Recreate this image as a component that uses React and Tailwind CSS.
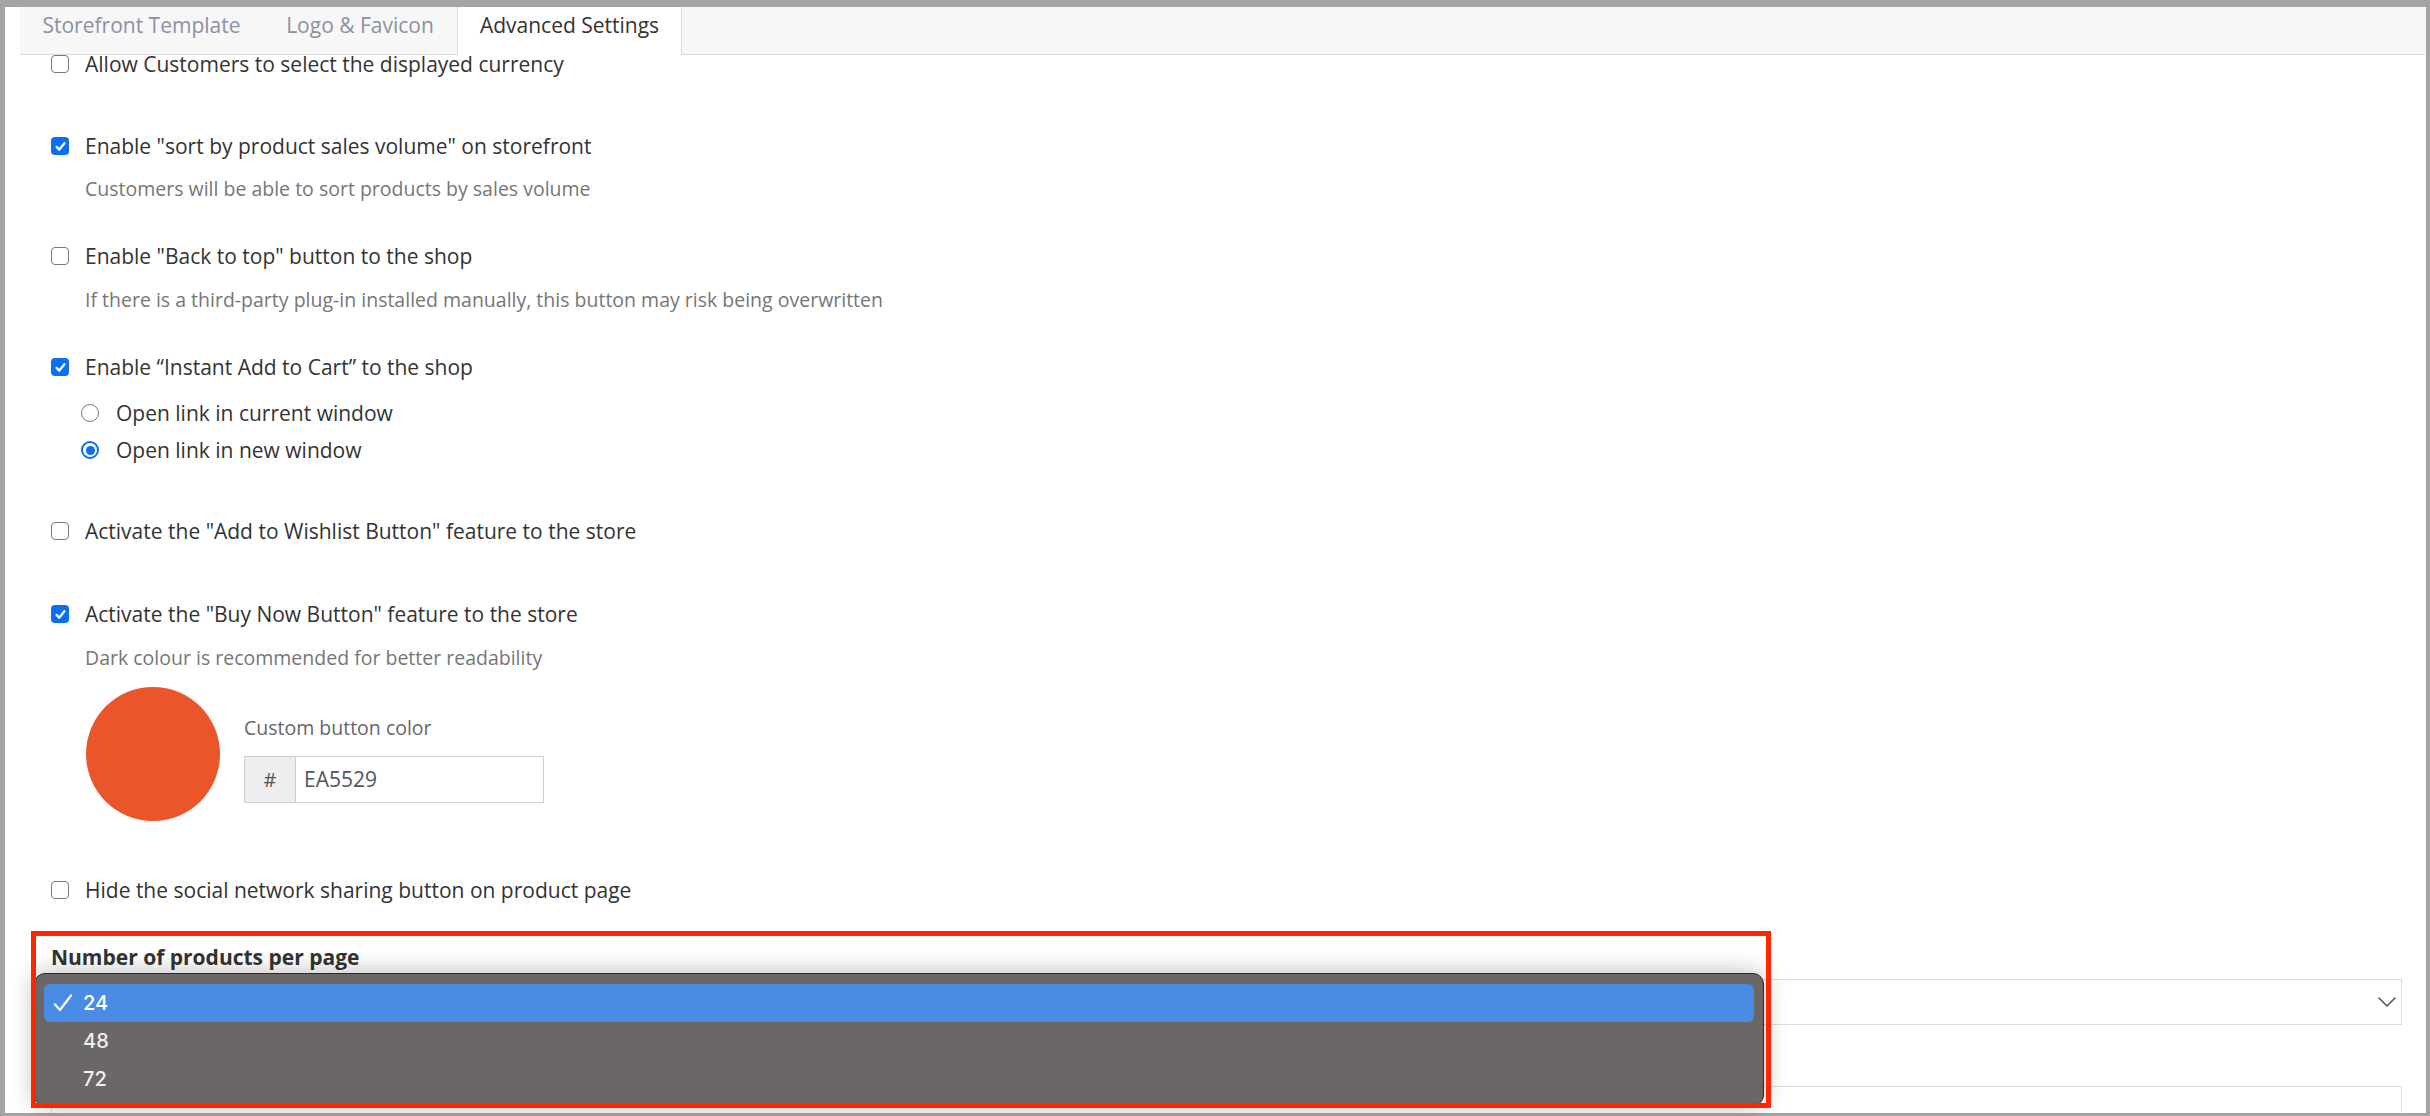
import React from "react";

function Box({ checked }) {
  if (checked) {
    return (
      <span className="w-[18px] h-[18px] rounded-[4px] bg-[#0b6ef5] flex items-center justify-center shrink-0">
        <svg width="13" height="13" viewBox="0 0 13 13">
          <path d="M2.6 6.9 L5.3 9.6 L10.4 3.2" stroke="white" strokeWidth="2.3" fill="none" strokeLinecap="round" strokeLinejoin="round" />
        </svg>
      </span>
    );
  }
  return <span className="w-[18px] h-[18px] rounded-[4px] border border-[#7a7a7a] bg-white shrink-0" />;
}

function Radio({ checked }) {
  if (checked) {
    return (
      <span className="w-[18px] h-[18px] rounded-full border-[2px] border-[#0b6ef5] bg-white flex items-center justify-center shrink-0">
        <span className="w-[9px] h-[9px] rounded-full bg-[#0b6ef5]" />
      </span>
    );
  }
  return <span className="w-[18px] h-[18px] rounded-full border border-[#7a7a7a] bg-white shrink-0" />;
}

function Row({ checked, children, className = "" }) {
  return (
    <div className={"flex items-center h-[18px] gap-[16px] " + className}>
      <Box checked={checked} />
      <span className="text-[21px] leading-[28px] text-[#333] whitespace-nowrap">{children}</span>
    </div>
  );
}

function Desc({ children, className = "" }) {
  return (
    <div className={"pl-[34px] text-[19.5px] leading-[24px] text-[#767676] whitespace-nowrap " + className}>
      {children}
    </div>
  );
}

function RadioRow({ checked, children, className = "" }) {
  return (
    <div className={"flex items-center h-[18px] pl-[30px] gap-[17px] " + className}>
      <Radio checked={checked} />
      <span className="text-[21px] leading-[28px] text-[#333] whitespace-nowrap">{children}</span>
    </div>
  );
}

export default function App() {
  return (
    <div className="relative w-[2430px] h-[1116px] overflow-hidden bg-[#a4a4a4] pt-[7px] pl-[5px] pr-[4px] pb-[3px] font-['Open_Sans',sans-serif]">
      <div className="h-full bg-white overflow-hidden pl-[15px]">
        {/* Tabs */}
        <div className="flex h-[48px] bg-[#f7f7f7] border-b border-[#dcdcdc]">
          <div className="w-[243px] flex items-start pt-[4px] justify-center text-[21px] leading-[28px] text-[#8b91a3] whitespace-nowrap">
            Storefront Template
          </div>
          <div className="w-[194px] flex items-start pt-[4px] justify-center text-[21px] leading-[28px] text-[#8b91a3] whitespace-nowrap">
            Logo &amp; Favicon
          </div>
          <div className="w-[225px] h-[48px] -mb-px bg-white border-x border-[#dcdcdc] flex items-start pt-[4px] justify-center text-[21px] leading-[28px] text-[#333] whitespace-nowrap">
            Advanced Settings
          </div>
        </div>

        {/* Content */}
        <div className="pl-[31px] pr-[24px] flex flex-col">
          <Row checked={false}>Allow Customers to select the displayed currency</Row>

          <Row checked className="mt-[64px]">Enable "sort by product sales volume" on storefront</Row>
          <Desc className="mt-[22px]">Customers will be able to sort products by sales volume</Desc>

          <Row checked={false} className="mt-[46px]">Enable "Back to top" button to the shop</Row>
          <Desc className="mt-[23px]">If there is a third-party plug-in installed manually, this button may risk being overwritten</Desc>

          <Row checked className="mt-[46px]">Enable “Instant Add to Cart” to the shop</Row>
          <RadioRow checked={false} className="mt-[28px]">Open link in current window</RadioRow>
          <RadioRow checked className="mt-[19px]">Open link in new window</RadioRow>

          <Row checked={false} className="mt-[63px]">Activate the "Add to Wishlist Button" feature to the store</Row>

          <Row checked className="mt-[65px]">Activate the "Buy Now Button" feature to the store</Row>
          <Desc className="mt-[23px]">Dark colour is recommended for better readability</Desc>

          <div className="mt-[17px] ml-[35px] flex gap-[24px]">
            <div className="w-[134px] h-[134px] rounded-full bg-[#ea5529]" />
            <div className="pt-[29px]">
              <div className="text-[19.5px] leading-[24px] text-[#666] whitespace-nowrap">Custom button color</div>
              <div className="mt-[16px] flex h-[47px] w-[300px] border border-[#cfcfcf]">
                <div className="w-[51px] bg-[#eeeeee] border-r border-[#cfcfcf] flex items-center justify-center text-[20px] text-[#555]">
                  #
                </div>
                <div className="flex items-center pl-[8px] text-[21px] text-[#555]">EA5529</div>
              </div>
            </div>
          </div>

          <Row checked={false} className="mt-[60px]">Hide the social network sharing button on product page</Row>

          <div className="mt-[44px] text-[21px] leading-[28px] font-bold text-[#333] whitespace-nowrap">
            Number of products per page
          </div>
          <div className="mt-[8px] h-[46px] border border-[#dddddd] flex items-center justify-end pr-[5px]">
            <svg width="18" height="10" viewBox="0 0 18 10">
              <path d="M1 1 L9 9 L17 1" stroke="#555" strokeWidth="1.6" fill="none" strokeLinecap="round" strokeLinejoin="round" />
            </svg>
          </div>
          <div className="mt-[61px] h-[47px] border border-[#dddddd]" />
        </div>
      </div>

      {/* Dropdown menu (native select popup) */}
      <div className="absolute left-[34px] top-[973px] w-[1730px] h-[133px] rounded-[11px] bg-[#6b6766] border border-[#2e2c2b] shadow-[0_0_24px_rgba(0,0,0,0.28)] pt-[10px] px-[9px] font-['Inter',sans-serif]">
        <div className="flex items-center h-[38px] rounded-[6px] bg-[#4a8be4] pl-[9px] text-white">
          <svg width="20" height="18" viewBox="0 0 20 18" className="shrink-0">
            <path d="M2 10.5 L7 16 L18 1.5" stroke="#f2f4f8" strokeWidth="2.4" fill="none" strokeLinecap="round" strokeLinejoin="round" />
          </svg>
          <span className="ml-[10px] text-[20px] font-medium leading-[24px]">24</span>
        </div>
        <div className="flex items-center h-[38px] pl-[39px] text-[20px] font-medium text-[#efefef]">48</div>
        <div className="flex items-center h-[37px] pl-[39px] text-[20px] font-medium text-[#efefef]">72</div>
      </div>

      {/* Red annotation box */}
      <div className="absolute left-[31px] top-[931px] w-[1740px] h-[177px] border-[5px] border-[#ff2600] pointer-events-none" />
    </div>
  );
}
